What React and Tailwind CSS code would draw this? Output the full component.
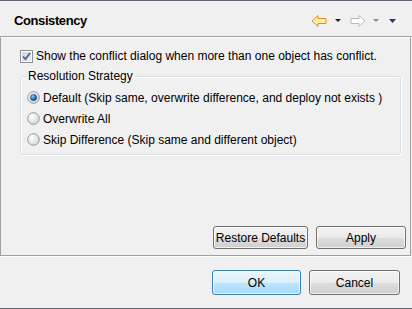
import React, { useState } from 'react';

function LeftArrow() {
  return (
    <svg width="16" height="12" viewBox="0 0 16 12">
      <polygon points="1,6 7,0.5 7,3.5 15,3.5 15,8.5 7,8.5 7,11.5" fill="#ffe9a8" stroke="#d49a20" strokeWidth="1" strokeLinejoin="round" />
    </svg>
  );
}

function RightArrow() {
  return (
    <svg width="16" height="12" viewBox="0 0 16 12">
      <polygon points="15,6 9,0.5 9,3.5 1,3.5 1,8.5 9,8.5 9,11.5" fill="#ffffff" stroke="#b9b9b9" strokeWidth="1" strokeLinejoin="round" />
    </svg>
  );
}

function Caret({ color, w = 6, h = 4 }) {
  return (
    <svg width={w} height={h} viewBox={`0 0 ${w} ${h}`}>
      <polygon points={`0,0 ${w},0 ${w / 2},${h}`} fill={color} />
    </svg>
  );
}

function CheckBox({ checked }) {
  return (
    <svg width="13" height="13" viewBox="0 0 13 13">
      <defs>
        <linearGradient id="cbg" x1="0" y1="0" x2="1" y2="1">
          <stop offset="0" stopColor="#cbcfd5" />
          <stop offset="1" stopColor="#f6f6f6" />
        </linearGradient>
      </defs>
      <rect x="0.5" y="0.5" width="12" height="12" fill="#ffffff" stroke="#8e8f8f" />
      <rect x="2.5" y="2.5" width="8" height="8" fill="url(#cbg)" stroke="#c2c6cc" strokeWidth="0.5" />
      {checked && <path d="M3 6.5 L5.5 9.2 L10 3" fill="none" stroke="#4a5f9c" strokeWidth="1.8" />}
    </svg>
  );
}

function Radio({ checked }) {
  return (
    <svg width="13" height="13" viewBox="0 0 13 13">
      <defs>
        <radialGradient id="rbg" cx="0.35" cy="0.35" r="0.8">
          <stop offset="0" stopColor="#ffffff" />
          <stop offset="1" stopColor="#cfd1d4" />
        </radialGradient>
        <radialGradient id="rdot" cx="0.4" cy="0.35" r="0.7">
          <stop offset="0" stopColor="#8fd0f5" />
          <stop offset="0.6" stopColor="#1d6fb5" />
          <stop offset="1" stopColor="#0c3a6e" />
        </radialGradient>
      </defs>
      <circle cx="6.5" cy="6.5" r="5.8" fill="url(#rbg)" stroke="#8d8d8d" strokeWidth="0.9" />
      {checked && <circle cx="6.5" cy="6.5" r="3.2" fill="url(#rdot)" stroke="#2b4f7a" strokeWidth="0.5" />}
    </svg>
  );
}

function Button({ children, className = '', primary = false }) {
  return (
    <button
      className={`flex items-center justify-center rounded-[3px] border text-[12px] text-black ${
        primary
          ? 'border-[#3c7fb1] bg-[linear-gradient(#eaf6fd_0%,#d9f0fc_50%,#bee6fd_51%,#a7d9f5_100%)] shadow-[inset_0_0_0_1px_rgba(255,255,255,0.7)]'
          : 'border-[#707070] bg-[linear-gradient(#f2f2f2_0%,#ebebeb_50%,#dddddd_51%,#cfcfcf_100%)] shadow-[inset_0_0_0_1px_rgba(255,255,255,0.7)]'
      } ${className}`}
    >
      {children}
    </button>
  );
}

export default function App() {
  const [showDialog] = useState(true);
  const [strategy] = useState('default');

  const options = [
    { id: 'default', label: 'Default (Skip same, overwrite difference, and deploy not exists )' },
    { id: 'overwrite', label: 'Overwrite All' },
    { id: 'skip', label: 'Skip Difference (Skip same and different object)' },
  ];

  return (
    <div className="w-[412px] h-[309px] bg-[#f0f0f0] flex flex-col border-t border-b border-[#5f6773] text-[12px] text-black font-['Liberation_Sans',Arial,sans-serif] overflow-hidden">
      {/* Header */}
      <div className="h-[36px] flex items-center justify-between pl-[14px] pr-[16px] border-b border-[#a0a0a0] shrink-0">
        <h1 className="text-[13px] font-bold tracking-[-0.4px] leading-none pt-[4px]">Consistency</h1>
        <div className="flex items-center pt-[4px]">
          <LeftArrow />
          <span className="ml-[8px]"><Caret color="#1e1e1e" w={6} h={3} /></span>
          <span className="ml-[9px]"><RightArrow /></span>
          <span className="ml-[7px]"><Caret color="#8a8a8a" w={6} h={3} /></span>
          <span className="ml-[10px]"><Caret color="#3b2d6b" w={7} h={4} /></span>
        </div>
      </div>

      {/* Content */}
      <div className="flex-1 flex flex-col border-t border-white border-l border-r border-b border-l-[#a0a0a0] border-r-[#a0a0a0] border-b-[#a0a0a0] mr-[1px] pl-[19px] pr-[4px] pt-[10px] pb-[6px]">
        <label className="flex items-center h-[16px] gap-[3px]">
          <CheckBox checked={showDialog} />
          <span>Show the conflict dialog when more than one object has conflict.</span>
        </label>

        <fieldset className="mt-[4px] mr-[5px] border border-[#d5dfe5] rounded-[3px] px-[6px] pb-[4px] shadow-[inset_1px_1px_0_#ffffff,1px_1px_0_#ffffff]">
          <legend className="px-[1px] leading-[16px]">Resolution Strategy</legend>
          <div className="flex flex-col pt-[3px]">
            {options.map((o) => (
              <label key={o.id} className="flex items-center h-[21px] gap-[3px]">
                <Radio checked={strategy === o.id} />
                <span>{o.label}</span>
              </label>
            ))}
          </div>
        </fieldset>

        <div className="flex-1" />

        <div className="flex justify-end gap-[8px]">
          <Button className="w-[95px] h-[23px]">Restore Defaults</Button>
          <Button className="w-[90px] h-[23px]">Apply</Button>
        </div>
      </div>

      {/* Footer */}
      <div className="h-[52px] shrink-0 border-t border-white flex items-center justify-end gap-[8px] pr-[12px]">
        <Button primary className="w-[89px] h-[25px]">OK</Button>
        <Button className="w-[91px] h-[25px]">Cancel</Button>
      </div>
    </div>
  );
}
